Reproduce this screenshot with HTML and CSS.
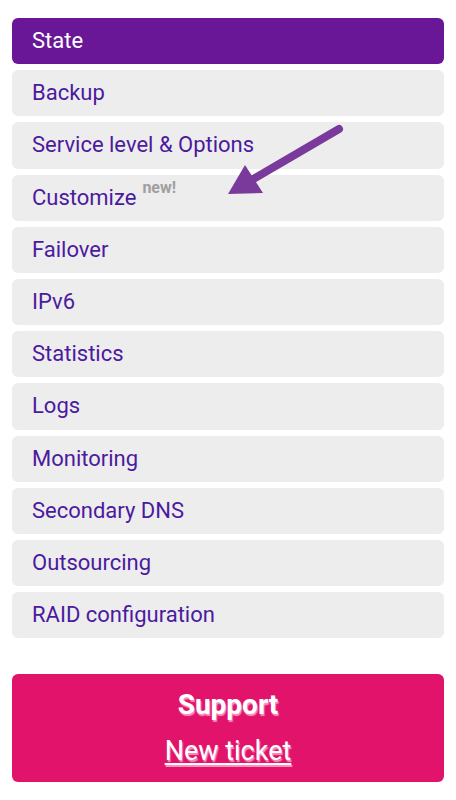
FILE: index.html
```html
<!DOCTYPE html>
<html>
<head>
<meta charset="utf-8">
<link rel="stylesheet" href="styles.css">
</head>
<body>
<div class="page">
  <nav class="menu">
    <a class="item active">State</a>
    <a class="item">Backup</a>
    <a class="item">Service level &amp; Options</a>
    <a class="item">Customize <sup class="new">new!</sup></a>
    <a class="item">Failover</a>
    <a class="item">IPv6</a>
    <a class="item">Statistics</a>
    <a class="item">Logs</a>
    <a class="item">Monitoring</a>
    <a class="item">Secondary DNS</a>
    <a class="item">Outsourcing</a>
    <a class="item">RAID configuration</a>
  </nav>
  <div class="support">
    <div class="support-title">Support</div>
    <a class="support-link">New ticket</a>
  </div>
  <svg class="arrow" width="456" height="800" viewBox="0 0 456 800">
    <line x1="339" y1="129" x2="250" y2="181" stroke="#7a3a9b" stroke-width="8" stroke-linecap="round"/>
    <polygon points="228,194 245,165 263,193" fill="#7a3a9b"/>
  </svg>
</div>
</body>
</html>
```
FILE: styles.css
```css
html, body {
  margin: 0;
  padding: 0;
  background: #ffffff;
}
body {
  font-family: Roboto, "Liberation Sans", sans-serif;
}
.page {
  position: relative;
  width: 456px;
  height: 800px;
  padding: 18px 12px 0 12px;
  box-sizing: border-box;
}
.menu {
  display: flex;
  flex-direction: column;
  gap: 6px;
}
.item {
  display: flex;
  align-items: center;
  height: 46.2px;
  padding: 0 20px;
  background: #ededed;
  border-radius: 6px;
  color: #4b1a9e;
  font-size: 22px;
  line-height: 1;
  box-sizing: border-box;
}
.item.active {
  background: #6a1797;
  color: #ffffff;
}
.new {
  font-size: 16px;
  font-weight: 700;
  color: #a0a0a0;
  margin-left: 6px;
  position: relative;
  top: -10px;
  vertical-align: baseline;
}
.support {
  margin-top: 36px;
  height: 108px;
  background: #e2136a;
  border-radius: 6px;
  display: flex;
  flex-direction: column;
  align-items: center;
  color: #ffffff;
  text-shadow: 1px 2px 1px rgba(255, 190, 215, 0.75);
}
.support-title {
  font-weight: 700;
  font-size: 28px;
  margin-top: 15px;
  line-height: 32px;
}
.support-link {
  font-size: 27px;
  line-height: 30px;
  margin-top: 15px;
  text-decoration: underline;
  text-underline-offset: 3px;
  text-decoration-thickness: 2px;
}
.arrow {
  position: absolute;
  left: 0;
  top: 0;
  pointer-events: none;
}
```
